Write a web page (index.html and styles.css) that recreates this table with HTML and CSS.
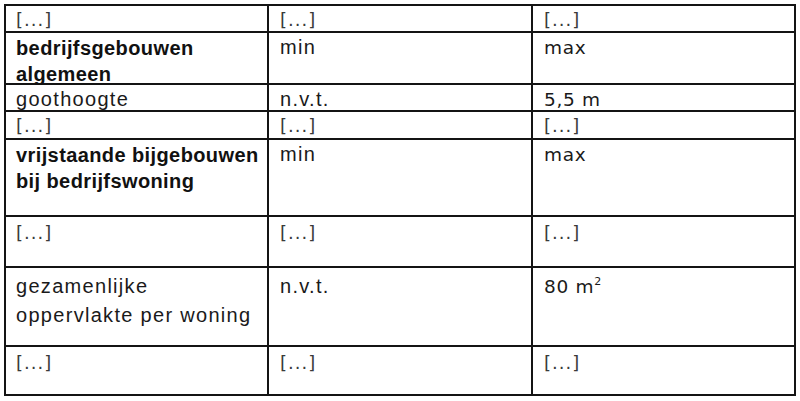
FILE: index.html
```html
<!DOCTYPE html>
<html lang="nl">
<head>
<meta charset="utf-8">
<title>Tabel</title>
<link rel="stylesheet" href="styles.css">
</head>
<body>
<div class="table">
  <div class="cell ell">[...]</div>
  <div class="cell ell">[...]</div>
  <div class="cell ell">[...]</div>

  <div class="cell b">bedrijfsgebouwen<br>algemeen</div>
  <div class="cell r">min</div>
  <div class="cell v">max</div>

  <div class="cell r">goothoogte</div>
  <div class="cell r">n.v.t.</div>
  <div class="cell v">5,5 m</div>

  <div class="cell ell">[...]</div>
  <div class="cell ell">[...]</div>
  <div class="cell ell">[...]</div>

  <div class="cell b">vrijstaande bijgebouwen<br>bij bedrijfswoning</div>
  <div class="cell r">min</div>
  <div class="cell v">max</div>

  <div class="cell ell low">[...]</div>
  <div class="cell ell low">[...]</div>
  <div class="cell ell low">[...]</div>

  <div class="cell r tall">gezamenlijke<br>oppervlakte per woning</div>
  <div class="cell r tall">n.v.t.</div>
  <div class="cell v tall">80 m<sup class="sq">2</sup></div>

  <div class="cell ell low">[...]</div>
  <div class="cell ell low">[...]</div>
  <div class="cell ell low">[...]</div>
</div>
</body>
</html>
```

FILE: styles.css
```css
html, body {
  margin: 0;
  padding: 0;
  background: #ffffff;
}

body {
  padding: 4px;
}

.table {
  width: 792px;
  height: 392px;
  box-sizing: border-box;
  padding: 2px;
  background: #141414;
  display: grid;
  grid-template-columns: 261px 262px 261px;
  grid-template-rows: 25px 50px 25px 26px 75px 49px 77px 47px;
  gap: 2px;
}

.cell {
  background: #ffffff;
  padding: 2px 6px 0 10px;
  line-height: 25px;
  overflow: visible;
  white-space: nowrap;
}

.cell:nth-child(3n+2),
.cell:nth-child(3n) {
  padding-left: 11px;
}

.r {
  font-family: "Liberation Sans", Arial, sans-serif;
  font-size: 20px;
  letter-spacing: 1.3px;
  color: #1a1a1a;
}

.b {
  font-family: "Liberation Sans", Arial, sans-serif;
  font-size: 20px;
  font-weight: bold;
  letter-spacing: 0.4px;
  color: #111111;
  line-height: 26px;
}

.v {
  font-family: "DejaVu Sans", Verdana, sans-serif;
  font-size: 18.5px;
  letter-spacing: 0.7px;
  color: #1a1a1a;
}

.ell {
  font-family: "DejaVu Sans", Verdana, sans-serif;
  font-size: 18px;
  letter-spacing: 1px;
  color: #3a3a3a;
  padding-top: 1px;
}

.low {
  padding-top: 3px;
}

.tall {
  padding-top: 4px;
  line-height: 29px;
}

.sq {
  font-size: 11px;
  line-height: 0;
  vertical-align: 8px;
  letter-spacing: 0;
}
```
